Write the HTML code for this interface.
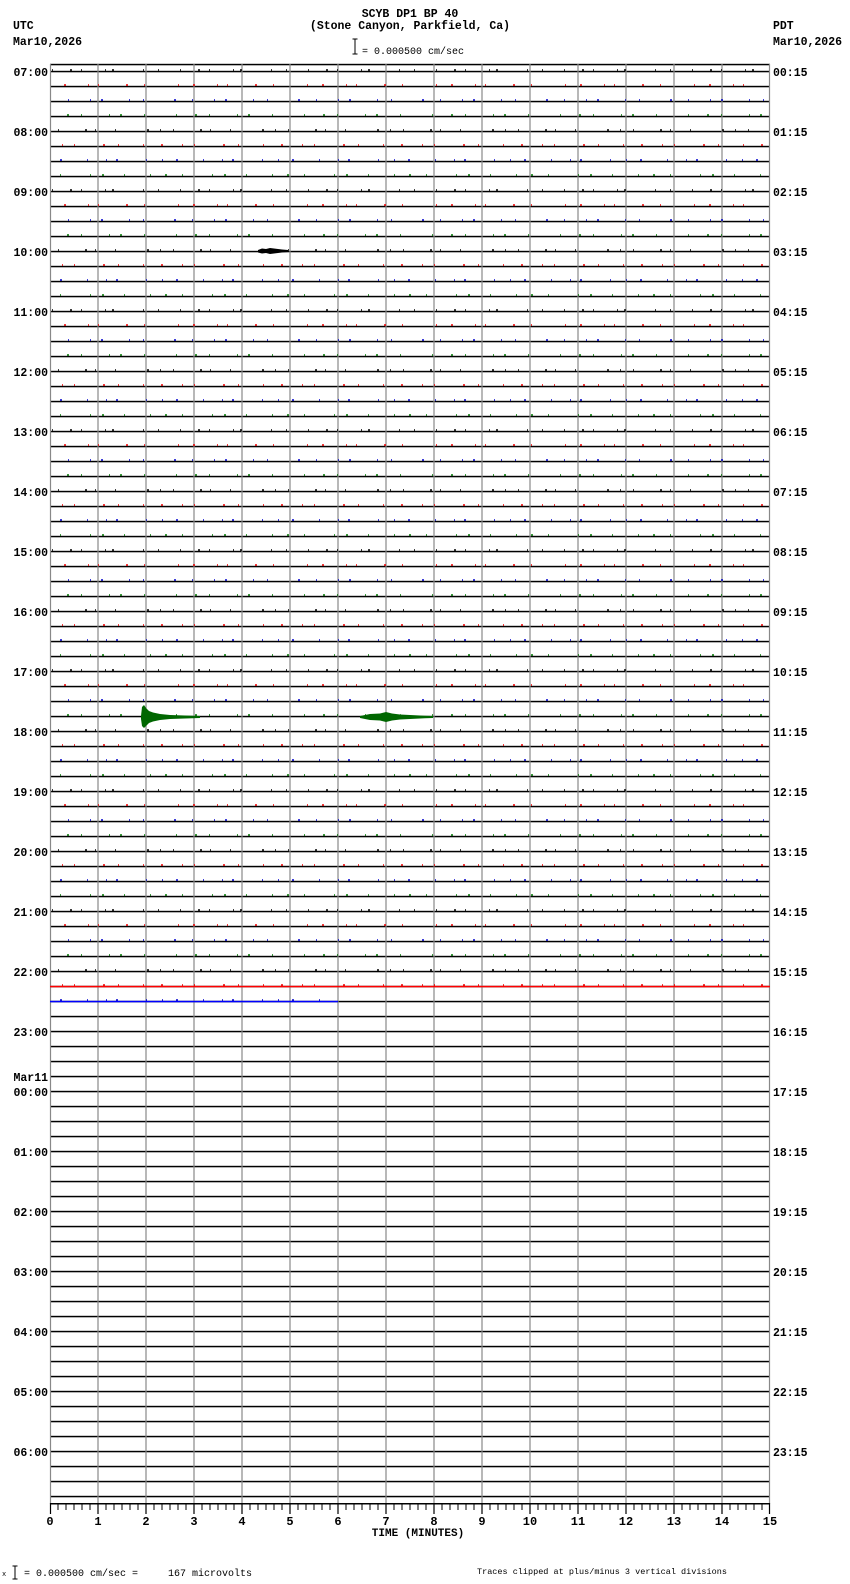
<!DOCTYPE html>
<html><head><meta charset="utf-8"><style>
html,body{margin:0;padding:0;background:#fff;}
svg{display:block;}
text{font-family:"Liberation Mono","DejaVu Sans Mono",monospace;font-weight:bold;fill:#000;}
.s{font-weight:normal;white-space:pre;}
</style></head><body>
<svg width="850" height="1584" viewBox="0 0 850 1584" xmlns="http://www.w3.org/2000/svg">
<defs>
<pattern id="rows" x="0" y="64" width="850" height="15" patternUnits="userSpaceOnUse">
<rect x="0" y="6.8" width="850" height="1.5" fill="#000"/>
</pattern>
</defs>
<text x="410" y="17" font-size="11.5" text-anchor="middle">SCYB DP1 BP 40</text>
<text x="410" y="29" font-size="11.5" text-anchor="middle">(Stone Canyon, Parkfield, Ca)</text>
<path d="M355 39V54M352.5 39H357.5M352.5 54H357.5" stroke="#000" stroke-width="1"/>
<text x="362" y="54" font-size="10" class="s">= 0.000500 cm/sec</text>
<text x="13" y="29" font-size="11.5">UTC</text>
<text x="13" y="45" font-size="11.5">Mar10,2026</text>
<text x="773" y="29" font-size="11.5">PDT</text>
<text x="773" y="45" font-size="11.5">Mar10,2026</text>

<rect x="50" y="63.8" width="720" height="1.5" fill="#000"/>
<rect x="50" y="64" width="720" height="1440" fill="url(#rows)"/>
<g stroke="#888" stroke-width="1.2">
<path d="M50.5 64V1504M98 64V1504M146 64V1504M194 64V1504M242 64V1504M290 64V1504M338 64V1504M386 64V1504M434 64V1504M482 64V1504M530 64V1504M578 64V1504M626 64V1504M674 64V1504M722 64V1504M769.5 64V1504"/>
</g>
<rect x="50" y="985.8" width="720" height="1.5" fill="#f00"/>
<rect x="50" y="1000.8" width="288" height="1.5" fill="#00f"/>

<g stroke-width="1.6" fill="none">
<path stroke="#000" stroke-dasharray="1 17 2 9 1 23 1 6 2 29 1 14 1 21" d="M52 70H770M52 190H770M52 310H770M52 430H770M52 550H770M52 670H770M52 790H770M52 910H770"/>
<path stroke="#000" stroke-dasharray="1 12 1 26 2 8 1 19 1 31 2 11" stroke-dashoffset="7" d="M52 130H770M52 250H770M52 370H770M52 490H770M52 610H770M52 730H770M52 850H770M52 970H770"/>
<path stroke="#e00" stroke-dasharray="1 14 2 22 1 9 1 27 2 16 1 33" stroke-dashoffset="3" d="M52 85H770M52 205H770M52 325H770M52 445H770M52 565H770M52 685H770M52 805H770M52 925H770"/>
<path stroke="#e00" stroke-dasharray="2 19 1 11 1 28 2 13 1 24 1 17" stroke-dashoffset="11" d="M52 145H770M52 265H770M52 385H770M52 505H770M52 625H770M52 745H770M52 865H770M52 985H770"/>
<path stroke="#00c" stroke-dasharray="2 16 1 21 1 10 2 26 1 13 1 30" stroke-dashoffset="2" d="M52 100H770M52 220H770M52 340H770M52 460H770M52 580H770M52 700H770M52 820H770M52 940H770"/>
<path stroke="#00c" stroke-dasharray="1 13 2 25 1 18 1 9 2 28 1 15" stroke-dashoffset="6" d="M52 160H770M52 280H770M52 400H770M52 520H770M52 640H770M52 760H770M52 880H770M52 1000H338"/>
<path stroke="#070" stroke-dasharray="1 18 2 12 1 27 1 10 2 22 1 31" stroke-dashoffset="4" d="M52 115H770M52 235H770M52 355H770M52 475H770M52 595H770M52 715H770M52 835H770M52 955H770"/>
<path stroke="#070" stroke-dasharray="2 15 1 29 1 11 2 20 1 25 1 14" stroke-dashoffset="9" d="M52 175H770M52 295H770M52 415H770M52 535H770M52 655H770M52 775H770M52 895H770"/>
</g>

<path fill="#000" d="M258 250L262 248.5L266 249L270 248L274 248.5L278 249L282 249.5L288 250L288 252L282 252.5L278 253L274 253.5L270 254L266 253L262 253.5L258 252.5Z"/>
<path fill="#060" d="M141 716L142 707L144 705L146 708L149 711L153 712.5L160 714L170 715L185 715.5L200 716L200 718L185 718.5L170 719L160 720L153 721.5L149 723L146 726L144 728L142 726L141 719Z"/>
<path fill="#060" d="M360 716L370 714L380 713.5L386 712L392 713.5L400 714.5L410 715L425 715.8L433 716L433 718L425 718.3L410 719L400 719.5L392 720.5L386 722L380 720.5L370 720L360 718Z"/>

<rect x="50" y="1503" width="720" height="1.5" fill="#000"/>
<g stroke="#000" stroke-width="1.2">
<path d="M50.5 1503V1514M98 1503V1514M146 1503V1514M194 1503V1514M242 1503V1514M290 1503V1514M338 1503V1514M386 1503V1514M434 1503V1514M482 1503V1514M530 1503V1514M578 1503V1514M626 1503V1514M674 1503V1514M722 1503V1514M769.5 1503V1514"/>
</g>
<g stroke="#000" stroke-width="1" id="minor">
<path d="M58 1504v6M66 1504v6M74 1504v6M82 1504v6M90 1504v6"/>
</g>
<use href="#minor" x="48"/><use href="#minor" x="96"/><use href="#minor" x="144"/><use href="#minor" x="192"/><use href="#minor" x="240"/><use href="#minor" x="288"/><use href="#minor" x="336"/><use href="#minor" x="384"/><use href="#minor" x="432"/><use href="#minor" x="480"/><use href="#minor" x="528"/><use href="#minor" x="576"/><use href="#minor" x="624"/><use href="#minor" x="672"/>
<g font-size="12" text-anchor="middle">
<text x="50" y="1525">0</text><text x="98" y="1525">1</text><text x="146" y="1525">2</text><text x="194" y="1525">3</text><text x="242" y="1525">4</text><text x="290" y="1525">5</text><text x="338" y="1525">6</text><text x="386" y="1525">7</text><text x="434" y="1525">8</text><text x="482" y="1525">9</text><text x="530" y="1525">10</text><text x="578" y="1525">11</text><text x="626" y="1525">12</text><text x="674" y="1525">13</text><text x="722" y="1525">14</text><text x="770" y="1525">15</text>
<text x="418" y="1536" font-size="11">TIME (MINUTES)</text>
</g>

<g font-size="11.5" text-anchor="end">
<text x="48" y="76">07:00</text><text x="48" y="136">08:00</text><text x="48" y="196">09:00</text><text x="48" y="256">10:00</text><text x="48" y="316">11:00</text><text x="48" y="376">12:00</text><text x="48" y="436">13:00</text><text x="48" y="496">14:00</text><text x="48" y="556">15:00</text><text x="48" y="616">16:00</text><text x="48" y="676">17:00</text><text x="48" y="736">18:00</text><text x="48" y="796">19:00</text><text x="48" y="856">20:00</text><text x="48" y="916">21:00</text><text x="48" y="976">22:00</text><text x="48" y="1036">23:00</text><text x="48" y="1081">Mar11</text><text x="48" y="1096">00:00</text><text x="48" y="1156">01:00</text><text x="48" y="1216">02:00</text><text x="48" y="1276">03:00</text><text x="48" y="1336">04:00</text><text x="48" y="1396">05:00</text><text x="48" y="1456">06:00</text>
</g>
<g font-size="11.5">
<text x="773" y="76">00:15</text><text x="773" y="136">01:15</text><text x="773" y="196">02:15</text><text x="773" y="256">03:15</text><text x="773" y="316">04:15</text><text x="773" y="376">05:15</text><text x="773" y="436">06:15</text><text x="773" y="496">07:15</text><text x="773" y="556">08:15</text><text x="773" y="616">09:15</text><text x="773" y="676">10:15</text><text x="773" y="736">11:15</text><text x="773" y="796">12:15</text><text x="773" y="856">13:15</text><text x="773" y="916">14:15</text><text x="773" y="976">15:15</text><text x="773" y="1036">16:15</text><text x="773" y="1096">17:15</text><text x="773" y="1156">18:15</text><text x="773" y="1216">19:15</text><text x="773" y="1276">20:15</text><text x="773" y="1336">21:15</text><text x="773" y="1396">22:15</text><text x="773" y="1456">23:15</text>
</g>

<text x="2" y="1576" font-size="7" class="s">x</text>
<path d="M15 1566V1579M12.5 1566H17.5M12.5 1579H17.5" stroke="#000" stroke-width="1"/>
<text x="24" y="1576" font-size="10" class="s" xml:space="preserve">= 0.000500 cm/sec =     167 microvolts</text>
<text x="477" y="1574" font-size="8.5" class="s">Traces clipped at plus/minus 3 vertical divisions</text>
</svg>
</body></html>
